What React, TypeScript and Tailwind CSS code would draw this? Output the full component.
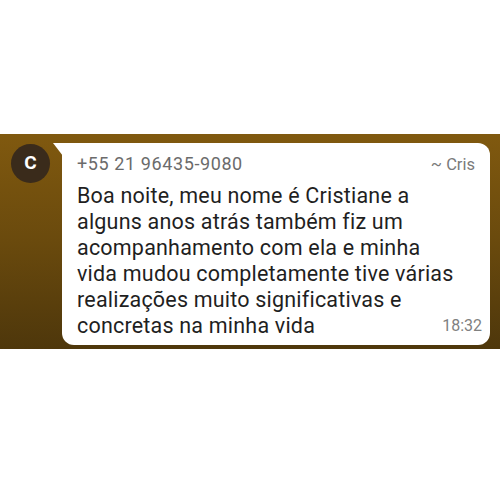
export default function App() {
    return (
        <div className="w-[500px] h-[500px] bg-white flex flex-col" style={{ fontFamily: "Roboto, 'Liberation Sans', sans-serif" }}>
            <div className="h-[134px]"></div>
            <div className="h-[215px] bg-gradient-to-b from-[#80590f] via-[#6a4a0d] to-[#4e370b] flex pl-[11px] pr-[10px] pt-[9px] pb-[4px]">
                <div className="w-[39px] h-[39px] mt-[1px] rounded-full bg-[#3a2b1b] flex items-center justify-center text-white text-[19px] font-bold shrink-0">
                    C
                </div>
                <div className="relative ml-[12px] flex-1 bg-white rounded-[12px] rounded-tl-none pl-[15px] pr-[8px] pt-[7px]">
                    <svg className="absolute -left-[9px] top-0" width="10" height="13" viewBox="0 0 10 13">
                        <path d="M0 0 L10 0 L10 13 Z" fill="#ffffff" />
                    </svg>
                    <div className="flex justify-between items-baseline">
                        <span className="text-[18px] tracking-[0.6px] text-[#6b6b6b]">+55 21 96435-9080</span>
                        <span className="text-[16.5px] text-[#7a7a7a] mr-[7px]">~ Cris</span>
                    </div>
                    <p className="text-[21.5px] tracking-[0.2px] leading-[26px] text-[#1f1f1f] mt-[5px]">
                        Boa noite, meu nome é Cristiane a<br />
                        alguns anos atrás também fiz um<br />
                        acompanhamento com ela e minha<br />
                        vida mudou completamente tive várias<br />
                        realizações muito significativas e<br />
                        concretas na minha vida
                    </p>
                    <span className="absolute right-[8px] bottom-[7px] text-[16px] text-[#808080]">18:32</span>
                </div>
            </div>
        </div>
    )
}
